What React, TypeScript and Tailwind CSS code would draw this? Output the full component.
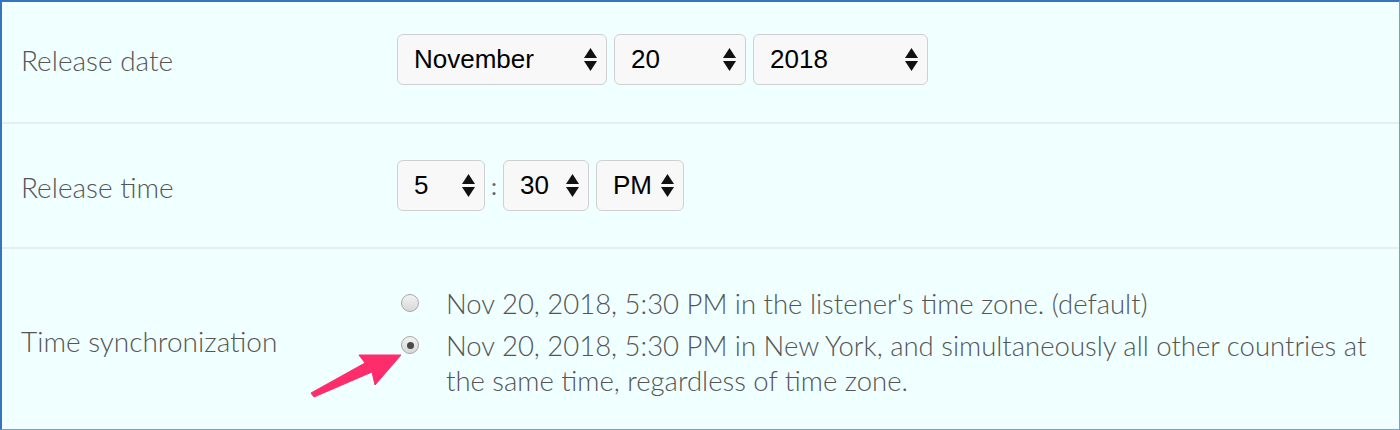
import React from "react";

function Arrows() {
  return (
    <svg width="13" height="23" viewBox="0 0 13 23" className="shrink-0">
      <polygon points="6.5,0 13,10 0,10" fill="#111" />
      <polygon points="0,13 13,13 6.5,23" fill="#111" />
    </svg>
  );
}

function Select({ value, w }: { value: string; w: string }) {
  return (
    <div
      className={`${w} h-[51px] flex items-center justify-between pl-[16px] pr-[9px] rounded-[6px] border border-[#cfcfcf] bg-[#f8f8f8] text-[26px] text-black`}
      style={{ fontFamily: '"Liberation Sans", Arial, sans-serif' }}
    >
      <span>{value}</span>
      <Arrows />
    </div>
  );
}

function Radio({ checked }: { checked?: boolean }) {
  return (
    <div className="w-[18px] h-[18px] shrink-0 rounded-full border border-[#a8a8a8] bg-gradient-to-b from-[#f2f2f2] to-[#d8d8d8] flex items-center justify-center mt-[8px]">
      {checked && <div className="w-[7px] h-[7px] rounded-full bg-[#4a4a4a]" />}
    </div>
  );
}

export default function App() {
  return (
    <div
      className="relative w-[1400px] h-[430px] bg-[#f0ffff] border-t-2 border-l-2 border-r border-b border-t-[#3675bd] border-l-[#3675bd] border-r-[#7c9fc7] border-b-[#7c9fc7] text-[#555] overflow-hidden"
      style={{ fontFamily: 'Lato, "Open Sans", sans-serif' }}
    >
      <div className="flex items-center h-[122px] border-b-2 border-[#e4eef3]">
        <div className="w-[395px] pl-[19px] text-[28px] font-light mt-[-4px]">Release date</div>
        <div className="flex gap-[7px] mt-[-5px]">
          <Select value="November" w="w-[210px]" />
          <Select value="20" w="w-[132px]" />
          <Select value="2018" w="w-[175px]" />
        </div>
      </div>
      <div className="flex items-center h-[125px] border-b-2 border-[#e4eef3]">
        <div className="w-[395px] pl-[19px] text-[28px] font-light mt-[2px]">Release time</div>
        <div className="flex items-center">
          <Select value="5" w="w-[88px]" />
          <span className="w-[18px] text-center text-[24px] text-[#666]">:</span>
          <Select value="30" w="w-[86px]" />
          <div className="w-[7px]" />
          <Select value="PM" w="w-[88px]" />
        </div>
      </div>
      <div className="flex items-center h-[180px]">
        <div className="w-[395px] pl-[19px] text-[28px] font-light mt-[3px]">Time synchronization</div>
        <div className="flex flex-col gap-[7px] mt-[6px]">
          <div className="flex gap-[27px] pl-[4px]">
            <Radio />
            <div className="text-[27.5px] font-light leading-[35px]">
              Nov 20, 2018, 5:30 PM in the listener's time zone. (default)
            </div>
          </div>
          <div className="flex gap-[27px] pl-[4px]">
            <Radio checked />
            <div className="text-[27.5px] font-light leading-[35px] w-[925px]">
              Nov 20, 2018, 5:30 PM in New York, and simultaneously all other countries at the same time, regardless of time zone.
            </div>
          </div>
        </div>
      </div>
      <svg
        className="absolute left-[300px] top-[340px]"
        width="110"
        height="60"
        viewBox="300 340 110 60"
      >
        <polygon
          points="309,391 363,361 357,353 399,353 373,383 370,370 312,395"
          fill="#fe2c6b"
          stroke="#fe2c6b"
          strokeWidth="1"
          strokeLinejoin="round"
        />
      </svg>
    </div>
  );
}
